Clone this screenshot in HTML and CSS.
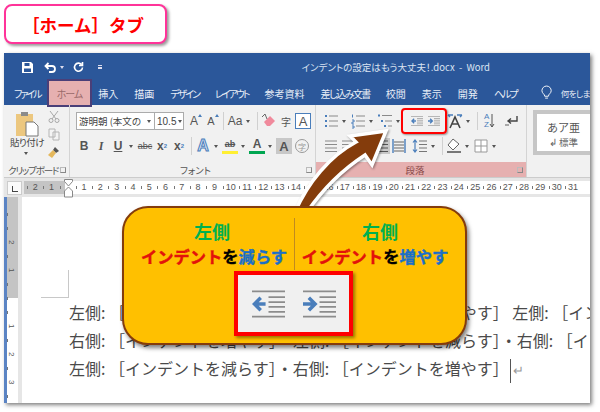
FILE: index.html
```html
<!DOCTYPE html>
<html lang="ja">
<head>
    <meta charset="UTF-8">
    <meta name="viewport" content="width=device-width, initial-scale=1.0">
    <title>ホームタブ</title>
    <link rel="stylesheet" href="styles.css">
</head>
<body>
    <svg class="defs" width="0" height="0">
        <symbol id="lines" viewBox="0 0 16 16">
            <path d="M2 3h12M2 6.500h12M2 10h12M2 13.500h12" stroke="#8a8a8a" stroke-width="1.200"/>
        </symbol>
        <symbol id="lines-dark" viewBox="0 0 16 16">
            <rect width="16" height="16" fill="#c8c8c8"/>
            <path d="M2 3h12M2 6.500h12M2 10h12M2 13.500h12" stroke="#555" stroke-width="1.200"/>
        </symbol>
        <symbol id="distribute" viewBox="0 0 16 16">
            <path d="M2 1v14M14 1v14" stroke="#4a7ebb" stroke-width="1.400"/>
            <path d="M3 4h10M3 7h10M3 10h10M3 13h10" stroke="#666" stroke-width="1.200"/>
        </symbol>
        <symbol id="bullets" viewBox="0 0 16 16">
            <path d="M2 3h2M2 8h2M2 13h2" stroke="#4a7ebb" stroke-width="2"/>
            <path d="M6 3h9M6 8h9M6 13h9" stroke="#8a8a8a" stroke-width="1.200"/>
        </symbol>
        <symbol id="numbers" viewBox="0 0 16 16">
            <path d="M2.500 1.500v3M2 7h2v2H2v2h2M2 13h2v2H2" stroke="#4a7ebb" fill="none"/>
            <path d="M6 3h9M6 8h9M6 13h9" stroke="#8a8a8a" stroke-width="1.200"/>
        </symbol>
        <symbol id="multi" viewBox="0 0 16 16">
            <path d="M1 2.500h2M4 8h2M7 13h2" stroke="#4a7ebb" stroke-width="2"/>
            <path d="M5 2.500h10M8 8h7M11 13h4" stroke="#8a8a8a" stroke-width="1.200"/>
        </symbol>
        <symbol id="indent-less" viewBox="0 0 34 28">
            <path d="M0 1h34M0 27h34M17 7h17M17 12h17M17 17h17M17 22h17" stroke="#8c8c8c" stroke-width="1.800"/>
            <path d="M14 14H3M9 7.500 2.500 14 9 20.500" stroke="#4a7ebb" stroke-width="3.600" fill="none"/>
        </symbol>
        <symbol id="indent-more" viewBox="0 0 34 28">
            <path d="M0 1h34M0 27h34M17 7h17M17 12h17M17 17h17M17 22h17" stroke="#8c8c8c" stroke-width="1.800"/>
            <path d="M0 14h11M6 7.500 12.500 14 6 20.500" stroke="#4a7ebb" stroke-width="3.600" fill="none"/>
        </symbol>
        <symbol id="asian" viewBox="0 0 16 16">
            <path d="M1 2h5M10 2h5M1 2l2 2M15 2l-2 2" stroke="#4a7ebb" stroke-width="1.400" fill="none"/>
            <path d="M3 15 8 4l5 11M5 11h6" stroke="#444" stroke-width="1.600" fill="none"/>
        </symbol>
        <symbol id="sort-arrow" viewBox="0 0 6 16">
            <path d="M3 1v13M1 11l2 3 2-3" stroke="#555" fill="none"/>
        </symbol>
        <symbol id="para-mark" viewBox="0 0 16 16">
            <path d="M13 3v5H5M7 5.500 4 8l3 2.500" stroke="#444" stroke-width="1.400" fill="none"/>
            <path d="M1 12h4" stroke="#888" stroke-width="1.400"/>
        </symbol>
        <symbol id="line-space" viewBox="0 0 16 16">
            <path d="M3 2v12M1 4.500 3 2l2 2.500M1 11.500 3 14l2-2.500" stroke="#4a7ebb" fill="none" stroke-width="1.200"/>
            <path d="M7 3h8M7 6.500h8M7 10h8M7 13.500h8" stroke="#777" stroke-width="1.200"/>
        </symbol>
        <symbol id="shading" viewBox="0 0 16 16">
            <path d="M7 1 2 7l5 5 6-6z" fill="#fff" stroke="#666"/>
            <path d="M1 14h14" stroke="#777" stroke-width="2"/>
        </symbol>
        <symbol id="borders" viewBox="0 0 16 16">
            <path d="M2 2h12v12H2zM8 2v12M2 8h12" stroke="#999" fill="#fff"/>
        </symbol>
    </svg>

    <div class="tab-label">［ホーム］タブ</div>

    <div class="window">
        <header class="title-area">
            <div class="title-row">
                <div class="qat">
                    <svg class="qat-save" width="11" height="11" viewBox="0 0 11 11">
                        <path d="M0 0h9l2 2v9H0z" fill="#fff"/>
                        <path d="M2.500 1h5v3h-5zM2 6.500h7V10H2z" fill="#2b579a"/>
                    </svg>
                    <svg class="qat-undo" width="12" height="11" viewBox="0 0 12 11">
                        <path d="M1.500 4H8a3 3 0 0 1 0 6H5M4.500 1 1.500 4l3 3" stroke="#fff" stroke-width="1.800" fill="none"/>
                    </svg>
                    <span class="qat-caret"></span>
                    <svg class="qat-redo" width="11" height="11" viewBox="0 0 11 11">
                        <path d="M8.500 2.500a4 4 0 1 0 1 3M9.500 0v3.500H6" stroke="#fff" stroke-width="1.600" fill="none"/>
                    </svg>
                    <span class="qat-more"></span>
                </div>
                <div class="doc-title">インデントの設定はもう大丈夫！.docx &nbsp;-&nbsp; Word</div>
            </div>
            <nav class="tabs">
                <span class="tab tab-kana">ファイル</span>
                <span class="tab tab-active">ホーム</span>
                <span class="tab">挿入</span>
                <span class="tab">描画</span>
                <span class="tab tab-kana">デザイン</span>
                <span class="tab tab-kana">レイアウト</span>
                <span class="tab">参考資料</span>
                <span class="tab tab-long">差し込み文書</span>
                <span class="tab">校閲</span>
                <span class="tab">表示</span>
                <span class="tab">開発</span>
                <span class="tab tab-kana">ヘルプ</span>
                <svg class="bulb" width="12" height="16" viewBox="0 0 12 16">
                    <path d="M4 11.500C4 9 1 8.500 1 5.500a5 5 0 0 1 10 0c0 3-3 3.500-3 6zM4.500 13.500h3" stroke="#fff" fill="none"/>
                </svg>
                <span class="tell-me">何をしま</span>
            </nav>
        </header>

        <section class="ribbon">
            <div class="group group-clip">
                <div class="clip-body">
                    <div class="paste">
                        <svg width="23" height="26" viewBox="0 0 23 26">
                            <path d="M0 3h17v22H0z" fill="#ecc77f"/>
                            <path d="M5 1h7v4H5z" fill="#8a8a8a"/>
                            <path d="M10 11h8l4 4v10H10z" fill="#fff" stroke="#777"/>
                        </svg>
                        <span class="paste-label">貼り付け</span>
                        <span class="caret"></span>
                    </div>
                    <div class="clip-tools">
                        <svg width="12" height="13" viewBox="0 0 12 13">
                            <path d="M2 1l6 8M10 1 4 9" stroke="#a8a8a8" fill="none"/>
                            <circle cx="3" cy="10.500" r="2" fill="none" stroke="#a8a8a8"/>
                            <circle cx="9" cy="10.500" r="2" fill="none" stroke="#a8a8a8"/>
                        </svg>
                        <svg width="12" height="13" viewBox="0 0 12 13">
                            <path d="M1 1h6v8H1zM5 4h6v8H5z" fill="#f4f4f4" stroke="#b4b4b4"/>
                        </svg>
                        <svg width="12" height="13" viewBox="0 0 12 13">
                            <path d="M7 1l4 4-3 2-3-3z" fill="#555"/>
                            <path d="M5 4l3 3-4 5-4-3z" fill="#e5b85c"/>
                        </svg>
                    </div>
                </div>
                <div class="group-label group-label-clip">クリップボード<span class="launcher"></span></div>
            </div>

            <div class="group group-font">
                <div class="row">
                    <div class="select select-font"><span>游明朝 (本文の</span><span class="caret"></span></div>
                    <div class="select select-size"><span>10.5</span><span class="caret"></span></div>
                    <span class="tool tool-first">A<i class="up"></i></span>
                    <span class="tool tool-small">A<i class="up"></i></span>
                    <span class="sep"></span>
                    <span class="tool">Aa</span><span class="caret"></span>
                    <span class="sep"></span>
                    <svg class="ico" viewBox="0 0 16 16">
                        <path d="M3 9 9 3l5 5-5 5H6z" fill="#f08a9c"/>
                        <path d="M1 4l3-3 2 5" stroke="#666" fill="none"/>
                    </svg>
                    <span class="tool ruby">字</span>
                    <span class="tool boxed">A</span>
                </div>
                <div class="row">
                    <span class="tool bold">B</span>
                    <span class="tool italic">I</span>
                    <span class="tool under">U</span><span class="caret"></span>
                    <span class="tool strike">abc</span>
                    <span class="tool bold">x<sub>2</sub></span>
                    <span class="tool bold">x<sup>2</sup></span>
                    <span class="sep"></span>
                    <span class="tool effect">A</span><span class="caret"></span>
                    <span class="tool marker">ab<i class="bar bar-yellow"></i></span><span class="caret"></span>
                    <span class="tool color">A<i class="bar bar-green"></i></span><span class="caret"></span>
                    <span class="tool shaded">A</span>
                    <span class="tool circled">字</span>
                </div>
                <div class="group-label">フォント<span class="launcher"></span></div>
            </div>

            <div class="group group-para">
                <div class="row">
                    <svg class="ico"><use href="#bullets"/></svg><span class="caret"></span>
                    <svg class="ico"><use href="#numbers"/></svg><span class="caret"></span>
                    <svg class="ico"><use href="#multi"/></svg><span class="caret"></span>
                    <span class="indent-pair">
                        <svg class="ico-indent"><use href="#indent-less"/></svg>
                        <svg class="ico-indent"><use href="#indent-more"/></svg>
                    </span>
                    <svg class="ico ico-asian"><use href="#asian"/></svg><span class="caret"></span>
                    <span class="sep"></span>
                    <span class="sort">
                        <span class="sort-text">A<br>Z</span>
                        <svg width="6" height="16"><use href="#sort-arrow"/></svg>
                    </span>
                    <svg class="ico ico-mark"><use href="#para-mark"/></svg>
                </div>
                <div class="row">
                    <svg class="ico"><use href="#lines"/></svg>
                    <svg class="ico"><use href="#lines"/></svg>
                    <svg class="ico"><use href="#lines"/></svg>
                    <svg class="ico"><use href="#lines-dark"/></svg>
                    <svg class="ico"><use href="#distribute"/></svg>
                    <svg class="ico ico-spacing"><use href="#line-space"/></svg><span class="caret"></span>
                    <span class="sep"></span>
                    <svg class="ico"><use href="#shading"/></svg><span class="caret"></span>
                    <svg class="ico"><use href="#borders"/></svg><span class="caret"></span>
                </div>
                <div class="group-label group-label-para">段落<span class="launcher"></span></div>
            </div>

            <div class="group group-styles">
                <div class="style-card">
                    <span class="style-sample">あア亜</span>
                    <span class="style-name">↲ 標準</span>
                </div>
            </div>
        </section>

        <div class="h-ruler">
            <span class="ruler-corner"></span>
            <div class="ruler-strip">
                <span>2</span><span>1</span><span></span>
                <span>1</span><span>2</span><span>3</span><span>4</span><span>5</span><span>6</span><span>7</span><span>8</span>
                <span>9</span><span>10</span><span>11</span><span>12</span><span>13</span><span>14</span><span>15</span><span>16</span>
                <span>17</span><span>18</span><span>19</span><span>20</span><span>21</span><span>22</span><span>23</span><span>24</span>
                <span>25</span><span>26</span><span>27</span><span>28</span><span>29</span><span>30</span><span>31</span>
            </div>
        </div>

        <div class="doc">
            <div class="v-ruler">
                <span></span><span></span><span>2</span><span></span><span>1</span><span></span><span></span><span></span>
                <span>1</span><span></span><span>2</span><span></span><span>3</span><span></span>
            </div>
            <div class="page">
                <div class="crop-mark"></div>
                <p class="doc-line">左側: ［インデントを減らす］・右側: ［インデントを増やす］ 左側: ［イン</p>
                <p class="doc-line">右側: ［インデントを増やす］・左側: ［インデントを減らす］・右側: ［イ</p>
                <p class="doc-line">左側: ［インデントを減らす］・右側: ［インデントを増やす］<span class="cursor"></span><span class="return">↵</span></p>
            </div>
        </div>
    </div>

    <!-- 画面の上に重ねるもの -->
    <svg class="ruler-marker" width="9" height="19" viewBox="0 0 9 19">
        <path d="M.500.500h8v2L4.500 7 .500 2.500zM4.500 8l4 4v6h-8v-6z" fill="#fff" stroke="#888"/>
    </svg>

    <div class="indent-highlight"></div>

    <svg class="arrow" width="110" height="100" viewBox="285 120 110 100">
        <path d="M295 212C308 182 330 156 356 142L350 136 386 131 372 165 365 155C345 168 325 186 307 212Z" fill="#843c0c" stroke="#fff" stroke-width="3.500"/>
    </svg>

    <div class="callout">
        <div class="callout-cols">
            <div class="callout-col">
                <div class="side">左側</div>
                <div class="action action-left"><span class="red">インデント</span>を<span class="blue">減らす</span></div>
            </div>
            <div class="callout-col">
                <div class="side">右側</div>
                <div class="action action-right"><span class="red">インデント</span>を<span class="blue">増やす</span></div>
            </div>
        </div>
        <div class="callout-panel">
            <svg class="panel-ico"><use href="#indent-less"/></svg>
            <svg class="panel-ico"><use href="#indent-more"/></svg>
        </div>
    </div>
</body>
</html>
```

FILE: styles.css
```css
* {
    box-sizing: border-box;
}

body {
    position: relative;
    margin: 0;
    width: 600px;
    height: 412px;
    overflow: hidden;
    background-color: #fff;
    font-family: "Noto Sans CJK JP", "Noto Sans", sans-serif;
    color: #444;
}

.defs {
    position: absolute;
}

.tab-label {
    display: flex;
    align-items: center;
    justify-content: center;
    width: 163px;
    height: 40px;
    margin: 4px 0 0 4px;
    padding-right: 5px;
    border: 2px solid #ff3399;
    border-radius: 8px;
    background-color: #fff;
    box-shadow: 2px 2px 3px rgba(0, 0, 0, 0.4);
    color: #f00;
    font-size: 17.500px;
    font-weight: 700;
}

.window {
    width: 586px;
    height: 350px;
    margin: 9px 0 0 4px;
    box-shadow: 2px 2px 4px rgba(0, 0, 0, 0.5);
    background-color: #fff;
    overflow: hidden;
}

/* タイトルバー */
.title-area {
    height: 52px;
    background-color: #2b579a;
    color: #fff;
}

.title-row {
    display: flex;
    justify-content: space-between;
    align-items: center;
    height: 28px;
    padding: 0 100px 0 18px;
}

.qat {
    display: flex;
    align-items: center;
}

.qat-undo {
    margin-left: 11px;
}

.qat-caret {
    width: 0;
    height: 0;
    margin-left: 4px;
    border: 2.5px solid transparent;
    border-top: 3px solid #dde;
    border-bottom: 0;
}

.qat-redo {
    margin-left: 9px;
}

.qat-more {
    width: 4px;
    height: 4px;
    margin-left: 14px;
    border-top: 1px solid #dde;
    border-bottom: 2px solid #dde;
}

.doc-title {
    font-size: 9.500px;
    color: #dbe4f2;
    white-space: nowrap;
    font-feature-settings: "palt";
}

.tabs {
    display: flex;
    align-items: stretch;
    height: 24px;
    padding-left: 2px;
    font-size: 10px;
    font-feature-settings: "palt";
    white-space: nowrap;
}

.tab {
    display: flex;
    align-items: center;
    padding: 0 8px;
    color: #e8eef7;
}

.tab-kana {
    letter-spacing: -2px;
}

.tab-long {
    letter-spacing: -1.500px;
}

.tab-active {
    background-color: #e6b0b0;
    color: #9a6a6a;
    letter-spacing: -1px;
    box-shadow: 0 0 0 2px #4a3f78;
}

.bulb {
    align-self: center;
    margin-left: 16px;
}

.tell-me {
    align-self: center;
    margin-left: 9px;
    font-size: 8.500px;
    letter-spacing: -0.500px;
    color: #e8eef7;
}

/* リボン */
.ribbon {
    display: flex;
    height: 72px;
    background-color: #f1f1f1;
    font-size: 10px;
}

.group {
    display: flex;
    flex-direction: column;
    flex: none;
    padding-top: 6px;
    border-right: 1px solid #d4d4d4;
}

.group-clip {
    width: 66px;
    padding-top: 0;
}

.group-font {
    width: 246px;
    padding-left: 6px;
}

.group-para {
    width: 211px;
    padding-left: 7px;
}

.group-styles {
    width: 63px;
    border-right: 0;
    padding: 5px 0 0 6px;
}

.row {
    display: flex;
    align-items: center;
    height: 20px;
    margin-bottom: 5px;
    white-space: nowrap;
}

.group-label {
    position: relative;
    display: flex;
    align-items: center;
    justify-content: center;
    height: 15px;
    margin-top: auto;
    font-size: 9.500px;
    color: #555;
    font-feature-settings: "palt";
}

.group-label-clip {
    justify-content: flex-start;
    padding-left: 4px;
    letter-spacing: -1.200px;
}

.group-label-para {
    margin-left: -7px;
    padding-right: 12px;
    background-color: #e6b0b0;
    color: #8a4a4a;
}

.launcher {
    position: absolute;
    right: 3px;
    top: 5px;
    width: 6px;
    height: 6px;
    border: 1px solid #888;
    border-top-color: #bbb;
    border-left-color: #bbb;
}

.clip-body {
    display: flex;
    flex: 1;
}

.paste {
    display: flex;
    flex-direction: column;
    align-items: center;
    width: 44px;
    padding: 6px 0 0 2px;
}

.paste-label {
    margin-top: -2px;
    font-size: 9.500px;
    line-height: 14px;
    font-feature-settings: "palt";
    letter-spacing: -0.500px;
    white-space: nowrap;
}

.clip-tools {
    display: flex;
    flex-direction: column;
    gap: 5px;
    padding: 5px 0 0 0;
}

.tool {
    position: relative;
    display: flex;
    flex: none;
    align-items: center;
    justify-content: center;
    width: 16px;
    height: 16px;
    margin-right: 1px;
    font-family: "Liberation Sans", sans-serif;
    font-size: 12px;
    color: #555;
}

.tool-first {
    margin-left: 2px;
}

.tool sub,
.tool sup {
    font-size: 6px;
    color: #4a7ebb;
    line-height: 0;
}

.up {
    position: absolute;
    top: 1px;
    right: 0;
    width: 0;
    height: 0;
    border: 2px solid transparent;
    border-bottom: 3px solid #4a7ebb;
    border-top: 0;
}

.tool-small {
    font-size: 11px;
}

.ruby {
    font-family: "Noto Sans CJK JP", sans-serif;
    font-size: 10px;
}

.boxed {
    border: 1px solid #4a7ebb;
    background-color: #fff;
    font-size: 13px;
}

.bold {
    font-weight: 700;
}

.italic {
    font-style: italic;
    font-family: "Liberation Serif", serif;
    font-weight: 700;
}

.under {
    text-decoration: underline;
    font-weight: 700;
}

.strike {
    text-decoration: line-through;
    font-size: 9px;
}

.effect {
    font-size: 16px;
    font-weight: 700;
    color: #dbe7f5;
    -webkit-text-stroke: 1px #4a7ebb;
}

.marker,
.color {
    align-items: flex-start;
    line-height: 12px;
    font-weight: 700;
}

.marker {
    font-size: 9px;
    text-decoration: line-through;
}

.bar {
    position: absolute;
    left: 0;
    right: 0;
    bottom: 0;
    height: 3px;
}

.bar-yellow {
    background-color: #ffef33;
}

.bar-green {
    background-color: #00a651;
}

.shaded {
    background-color: #c8c8c8;
    font-weight: 700;
    font-size: 13px;
}

.circled {
    width: 14px;
    height: 14px;
    margin-left: 2px;
    border: 1px solid #999;
    border-radius: 50%;
    font-family: "Noto Sans CJK JP", sans-serif;
    font-size: 8px;
    color: #999;
}

.ico {
    flex: none;
    width: 16px;
    height: 16px;
    margin-right: 1px;
}

.ico-spacing {
    margin-left: 4px;
}

.ico-asian {
    margin-left: 7px;
}

.ico-mark {
    margin-left: 4px;
}

.indent-pair {
    display: flex;
    flex: none;
    gap: 5px;
    margin-left: 7px;
}

.ico-indent {
    width: 12px;
    height: 10px;
}

.sort {
    display: flex;
    flex: none;
    align-items: center;
    width: 16px;
    margin-left: 3px;
}

.sort-text {
    font-family: "Liberation Sans", sans-serif;
    font-size: 8px;
    line-height: 8px;
    color: #4a7ebb;
}

.sep {
    flex: none;
    width: 1px;
    height: 18px;
    margin: 0 3px;
    background-color: #d0d0d0;
}

.caret {
    position: relative;
    flex: none;
    width: 9px;
    height: 8px;
    margin-right: 1px;
}

.caret::after {
    content: "";
    position: absolute;
    top: 3px;
    left: 2px;
    border: 2.500px solid transparent;
    border-top: 3px solid #555;
    border-bottom: 0;
}

.select {
    display: flex;
    flex: none;
    align-items: center;
    justify-content: space-between;
    height: 18px;
    padding-left: 2px;
    border: 1px solid #ababab;
    background-color: #fff;
    font-size: 10px;
    color: #444;
    white-space: nowrap;
}

.select-font {
    width: 79px;
    font-size: 9.500px;
    font-feature-settings: "palt";
}

.select-size {
    width: 30px;
    margin-left: -1px;
    font-family: "Liberation Sans", sans-serif;
}

.select .caret {
    margin: 0;
}

.style-card {
    display: flex;
    flex-direction: column;
    align-items: center;
    width: 57px;
    height: 45px;
    padding-top: 4px;
    border: 4px solid #c6c6c6;
    border-right: 0;
    background-color: #fff;
}

.style-sample {
    font-size: 11px;
    line-height: 18px;
    color: #555;
}

.style-name {
    font-size: 9.500px;
    line-height: 13px;
    color: #666;
}

/* ルーラー */
.h-ruler {
    display: flex;
    align-items: center;
    height: 20px;
    padding-left: 3px;
    background-color: #e6e6e6;
    border-top: 1px solid #ccc;
}

.ruler-corner {
    position: relative;
    flex: none;
    width: 15px;
    height: 14px;
    margin-right: 2px;
    background-color: #fafafa;
    border: 1px solid #ccc;
}

.ruler-corner::after {
    content: "";
    position: absolute;
    left: 4px;
    top: 4px;
    width: 5px;
    height: 5px;
    border-left: 1px solid #444;
    border-bottom: 1px solid #444;
}

.ruler-strip {
    display: flex;
    flex: 1;
    height: 13px;
    padding-left: 3px;
    overflow: hidden;
    background: linear-gradient(to right, #c4c4c4 41px, #fff 41px);
    font-family: "Liberation Sans", sans-serif;
    font-size: 9px;
    line-height: 13px;
    color: #555;
}

.ruler-strip span {
    position: relative;
    flex: none;
    width: 16.300px;
    text-align: center;
}

.ruler-strip span::before {
    content: "";
    position: absolute;
    left: 0;
    top: 5px;
    width: 1px;
    height: 3px;
    background-color: #777;
}

.ruler-marker {
    position: absolute;
    left: 64px;
    top: 179px;
}

/* 文書 */
.doc {
    display: flex;
    height: 206px;
}

.v-ruler {
    flex: none;
    width: 18px;
    padding-top: 10px;
    border-left: 3px solid #5b84c4;
    border-right: 4px solid #e6e6e6;
    background: linear-gradient(to bottom, #c4c4c4 101px, #fff 101px);
    font-family: "Liberation Sans", sans-serif;
    font-size: 8px;
    color: #555;
}

.v-ruler span {
    display: flex;
    align-items: center;
    justify-content: center;
    height: 14px;
    writing-mode: vertical-rl;
}

.v-ruler span:empty::before {
    content: "";
    width: 1px;
    height: 3px;
    background-color: #777;
}

.page {
    flex: 1;
    min-width: 0;
    padding-top: 73px;
    overflow: hidden;
}

.crop-mark {
    width: 28px;
    height: 28px;
    margin-left: 19px;
    border-right: 1px solid #c8c8c8;
    border-bottom: 1px solid #c8c8c8;
}

.doc-line {
    height: 28px;
    margin: 0 0 0 47px;
    font-size: 16px;
    line-height: 28px;
    white-space: nowrap;
    color: #4a4a4a;
}

.cursor {
    display: inline-block;
    width: 1px;
    height: 24px;
    margin-left: 1px;
    vertical-align: middle;
    background-color: #555;
}

.return {
    margin-left: 2px;
    color: #999;
    font-size: 13px;
}

/* 重ねる部分 */
.indent-highlight {
    position: absolute;
    left: 401px;
    top: 108px;
    width: 46px;
    height: 26px;
    border: 2.500px solid #f00;
    border-radius: 4px;
    box-shadow: 1px 1px 2px rgba(0, 0, 0, 0.4);
}

.arrow {
    position: absolute;
    left: 285px;
    top: 120px;
    filter: drop-shadow(1px 1px 1px rgba(0, 0, 0, 0.4));
}

.callout {
    position: absolute;
    left: 122px;
    top: 206px;
    width: 345px;
    height: 139px;
    padding-top: 10px;
    border: 2px solid #843c0c;
    border-radius: 26px;
    background-color: #ffc000;
    box-shadow: 2px 3px 4px rgba(0, 0, 0, 0.5);
}

.callout-cols {
    display: flex;
    height: 52px;
}

.callout-col {
    display: flex;
    flex-direction: column;
    align-items: center;
    flex: none;
    width: 170px;
    padding-left: 6px;
}

.callout-col + .callout-col {
    width: 171px;
    padding-left: 0;
    border-left: 1px solid #c08a20;
}

.side {
    font-size: 18px;
    font-weight: 700;
    line-height: 26px;
    color: #00b050;
}

.action {
    font-size: 16.300px;
    font-weight: 700;
    line-height: 24px;
    color: #000;
    white-space: nowrap;
    -webkit-text-stroke: 0.400px currentColor;
}

.action-left {
    margin-left: 4px;
}

.action-right {
    margin-right: 10px;
}

.red {
    color: #e3120b;
}

.blue {
    color: #1a6fc8;
}

.callout-panel {
    display: flex;
    align-items: center;
    justify-content: center;
    gap: 18px;
    width: 119px;
    height: 65px;
    margin: 1px 0 0 110px;
    border: 4px solid #f00;
    background-color: #f0f0f0;
    box-shadow: 2px 2px 3px rgba(0, 0, 0, 0.4);
}

.panel-ico {
    width: 33px;
    height: 28px;
}
```
